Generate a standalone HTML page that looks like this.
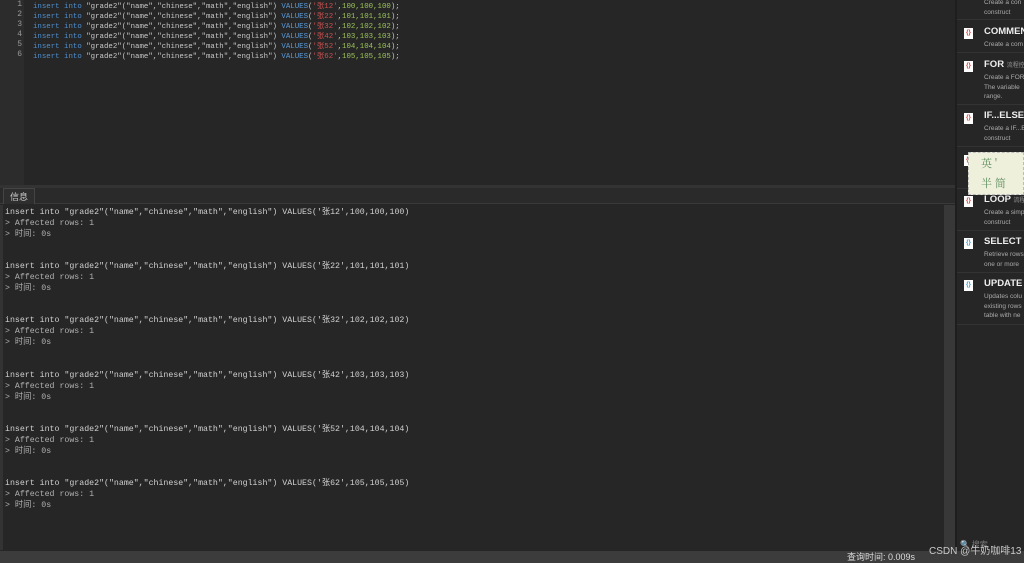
<!DOCTYPE html><html><head><meta charset="utf-8"><style>
*{margin:0;padding:0;box-sizing:border-box}
body{width:1024px;height:563px;background:#262626;overflow:hidden;position:relative;font-family:"Liberation Mono","Noto Sans CJK SC",monospace}
.abs{position:absolute}
.ed{left:0;top:0;width:956px;height:185px;background:#262626}
.gut{left:0;top:0;width:24px;height:185px;background:#2c2c2c}
.ln{position:absolute;left:0;width:22px;text-align:right;font-size:8px;color:#9a9a9a}
.code{position:absolute;left:33px;font-size:7.4px;color:#c8c8c8;white-space:pre}
.kw{color:#4f8fd0}.st{color:#d05050}.nm{color:#9bc45a}.vl{color:#5a9ad8}
.out{position:absolute;left:5px;font-size:8.25px;color:#d0d0d0;white-space:pre;line-height:11px}
.g{color:#b0b0b0}
.it{position:absolute;left:957px;width:67px;border-bottom:1px solid #333}
.ic{position:absolute;left:7px;width:9px;height:11px;background:#fff;font-size:6px;color:#d33;text-align:center;line-height:11px;font-family:"Liberation Sans",sans-serif;font-weight:bold}
.t{position:absolute;left:27px;font:bold 9.5px "Liberation Sans",sans-serif;color:#eee;white-space:nowrap}
.d{position:absolute;left:27px;font:6.5px/9.5px "Liberation Sans",sans-serif;color:#aaa;white-space:nowrap}
</style></head><body>
<div class="abs ed"></div><div class="abs gut"></div>
<div style="position:absolute;top:0;left:0">
<div class="ln" style="top:0">1</div><div class="ln" style="top:10px">2</div><div class="ln" style="top:20px">3</div><div class="ln" style="top:30px">4</div><div class="ln" style="top:40px">5</div><div class="ln" style="top:50px">6</div>
<div class="code" style="top:0"><span class="kw">insert into</span> "grade2"("name","chinese","math","english") <span class="vl">VALUES</span>(<span class="st">'张12'</span>,<span class="nm">100,100,100</span>);</div>
<div class="code" style="top:10px"><span class="kw">insert into</span> "grade2"("name","chinese","math","english") <span class="vl">VALUES</span>(<span class="st">'张22'</span>,<span class="nm">101,101,101</span>);</div>
<div class="code" style="top:20px"><span class="kw">insert into</span> "grade2"("name","chinese","math","english") <span class="vl">VALUES</span>(<span class="st">'张32'</span>,<span class="nm">102,102,102</span>);</div>
<div class="code" style="top:30px"><span class="kw">insert into</span> "grade2"("name","chinese","math","english") <span class="vl">VALUES</span>(<span class="st">'张42'</span>,<span class="nm">103,103,103</span>);</div>
<div class="code" style="top:40px"><span class="kw">insert into</span> "grade2"("name","chinese","math","english") <span class="vl">VALUES</span>(<span class="st">'张52'</span>,<span class="nm">104,104,104</span>);</div>
<div class="code" style="top:50px"><span class="kw">insert into</span> "grade2"("name","chinese","math","english") <span class="vl">VALUES</span>(<span class="st">'张62'</span>,<span class="nm">105,105,105</span>);</div>
</div>
<div class="abs" style="left:0;top:185px;width:956px;height:3px;background:#333"></div>
<div class="abs" style="left:0;top:188px;width:956px;height:16px;background:#2a2a2a;border-bottom:1px solid #3a3a3a"></div>
<div class="abs" style="left:3px;top:188px;width:32px;height:16px;border:1px solid #444;border-bottom:none;background:#2e2e2e;font:9px/15px 'Noto Sans CJK SC',sans-serif;color:#ccc;text-align:center">信息</div>
<div class="abs" style="left:0;top:205px;width:3px;height:345px;background:#333"></div>
<div class="abs" style="left:944px;top:205px;width:11px;height:345px;background:#383838"></div>
<div style="position:absolute;left:0;top:207px">
<div class="out" style="top:0">insert into "grade2"("name","chinese","math","english") VALUES('张12',100,100,100)
<span class="g">&gt; Affected rows: 1
&gt; 时间: 0s</span></div>
<div class="out" style="top:54px">insert into "grade2"("name","chinese","math","english") VALUES('张22',101,101,101)
<span class="g">&gt; Affected rows: 1
&gt; 时间: 0s</span></div>
<div class="out" style="top:108px">insert into "grade2"("name","chinese","math","english") VALUES('张32',102,102,102)
<span class="g">&gt; Affected rows: 1
&gt; 时间: 0s</span></div>
<div class="out" style="top:163px">insert into "grade2"("name","chinese","math","english") VALUES('张42',103,103,103)
<span class="g">&gt; Affected rows: 1
&gt; 时间: 0s</span></div>
<div class="out" style="top:217px">insert into "grade2"("name","chinese","math","english") VALUES('张52',104,104,104)
<span class="g">&gt; Affected rows: 1
&gt; 时间: 0s</span></div>
<div class="out" style="top:271px">insert into "grade2"("name","chinese","math","english") VALUES('张62',105,105,105)
<span class="g">&gt; Affected rows: 1
&gt; 时间: 0s</span></div>
</div>
<div class="abs" style="left:955px;top:0;width:2px;height:551px;background:#1e1e1e"></div>
<div class="abs" style="left:957px;top:0;width:67px;height:551px;background:#262626"></div>
<div class="it" style="top:0;height:20px"><div class="d" style="top:-2px">Create a con<br>construct</div></div>
<div class="it" style="top:20px;height:33px"><div class="ic" style="top:8px">{}</div><div class="t" style="top:6px">COMMENT</div><div class="d" style="top:20px">Create a com</div></div>
<div class="it" style="top:53px;height:52px"><div class="ic" style="top:8px">{}</div><div class="t" style="top:6px">FOR <span style="font-size:6px;font-weight:normal;color:#999">流程控</span></div><div class="d" style="top:20px">Create a FOR<br>The variable<br>range.</div></div>
<div class="it" style="top:105px;height:42px"><div class="ic" style="top:8px">{}</div><div class="t" style="top:5px">IF...ELSE...</div><div class="d" style="top:19px">Create a IF...E<br>construct</div></div>
<div class="it" style="top:147px;height:42px"><div class="ic" style="top:8px">{}</div></div>
<div class="abs" style="left:968px;top:152px;width:56px;height:43px;background:#eef0dc;border:1px dashed #bbb;font:11px/20px 'Noto Serif CJK SC',serif;color:#5a8a5a;padding-left:12px">英 '<br>半 简</div>
<div class="it" style="top:189px;height:42px"><div class="ic" style="top:7px">{}</div><div class="t" style="top:5px">LOOP <span style="font-size:6px;font-weight:normal;color:#999">流程</span></div><div class="d" style="top:19px">Create a simp<br>construct</div></div>
<div class="it" style="top:231px;height:42px"><div class="ic" style="top:7px;color:#39c">{}</div><div class="t" style="top:5px">SELECT S</div><div class="d" style="top:19px">Retrieve rows<br>one or more</div></div>
<div class="it" style="top:273px;height:52px"><div class="ic" style="top:7px;color:#39c">{}</div><div class="t" style="top:5px">UPDATE</div><div class="d" style="top:19px">Updates colu<br>existing rows<br>table with ne</div></div>
<div class="abs" style="left:960px;top:539px;font:8px 'Noto Sans CJK SC',sans-serif;color:#777">🔍 搜索</div>
<div class="abs" style="left:0;top:551px;width:1024px;height:12px;background:#3c3c3c"></div>
<div class="abs" style="left:847px;top:551px;font:9px/12px 'Liberation Sans','Noto Sans CJK SC',sans-serif;color:#ddd">查询时间: 0.009s</div>
<div class="abs" style="left:929px;top:545px;font:10px/14px 'Liberation Sans','Noto Sans CJK SC',sans-serif;color:#ccc">CSDN @牛奶咖啡13</div>
</body></html>
